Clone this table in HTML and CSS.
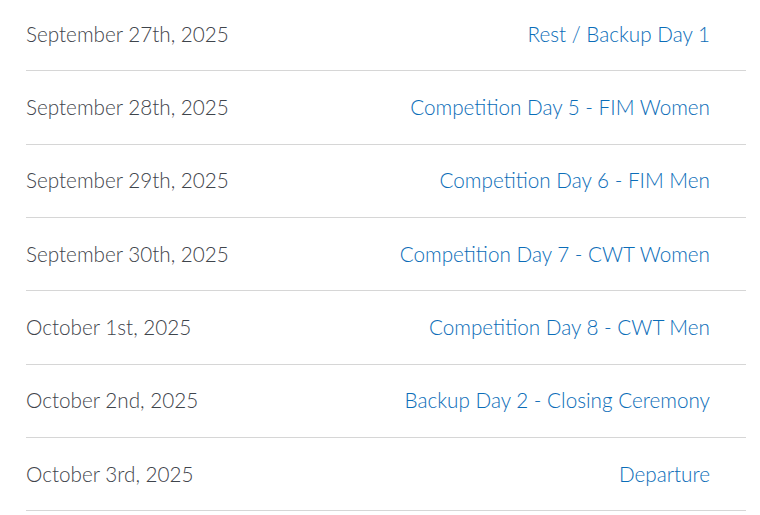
FILE: index.html
```html
<!DOCTYPE html>
<html>
<head>
<meta charset="utf-8">
<link rel="stylesheet" href="styles.css">
</head>
<body>
<ul class="schedule">
  <li class="row"><span class="date">September 27th, 2025</span><a class="event">Rest / Backup Day 1</a></li>
  <li class="row"><span class="date">September 28th, 2025</span><a class="event">Competition Day 5 - FIM Women</a></li>
  <li class="row"><span class="date">September 29th, 2025</span><a class="event">Competition Day 6 - FIM Men</a></li>
  <li class="row"><span class="date">September 30th, 2025</span><a class="event">Competition Day 7 - CWT Women</a></li>
  <li class="row"><span class="date">October 1st, 2025</span><a class="event">Competition Day 8 - CWT Men</a></li>
  <li class="row"><span class="date">October 2nd, 2025</span><a class="event">Backup Day 2 - Closing Ceremony</a></li>
  <li class="row"><span class="date">October 3rd, 2025</span><a class="event">Departure</a></li>
</ul>
</body>
</html>
```
FILE: styles.css
```css
html, body {
  margin: 0;
  padding: 0;
  background: #ffffff;
}
.schedule {
  list-style: none;
  margin: -2px 0 0 26px;
  padding: 0;
  width: 720px;
  font-family: Lato, "Open Sans", sans-serif;
  font-weight: 300;
  font-size: 20.7px;
}
.row {
  display: flex;
  justify-content: space-between;
  align-items: center;
  box-sizing: border-box;
  height: 73.33px;
  padding: 0 36px 1px 0;
  border-bottom: 1px solid #d6d6d6;
}
.date {
  color: #3f454c;
}
.event {
  color: #0b6db8;
}
```
